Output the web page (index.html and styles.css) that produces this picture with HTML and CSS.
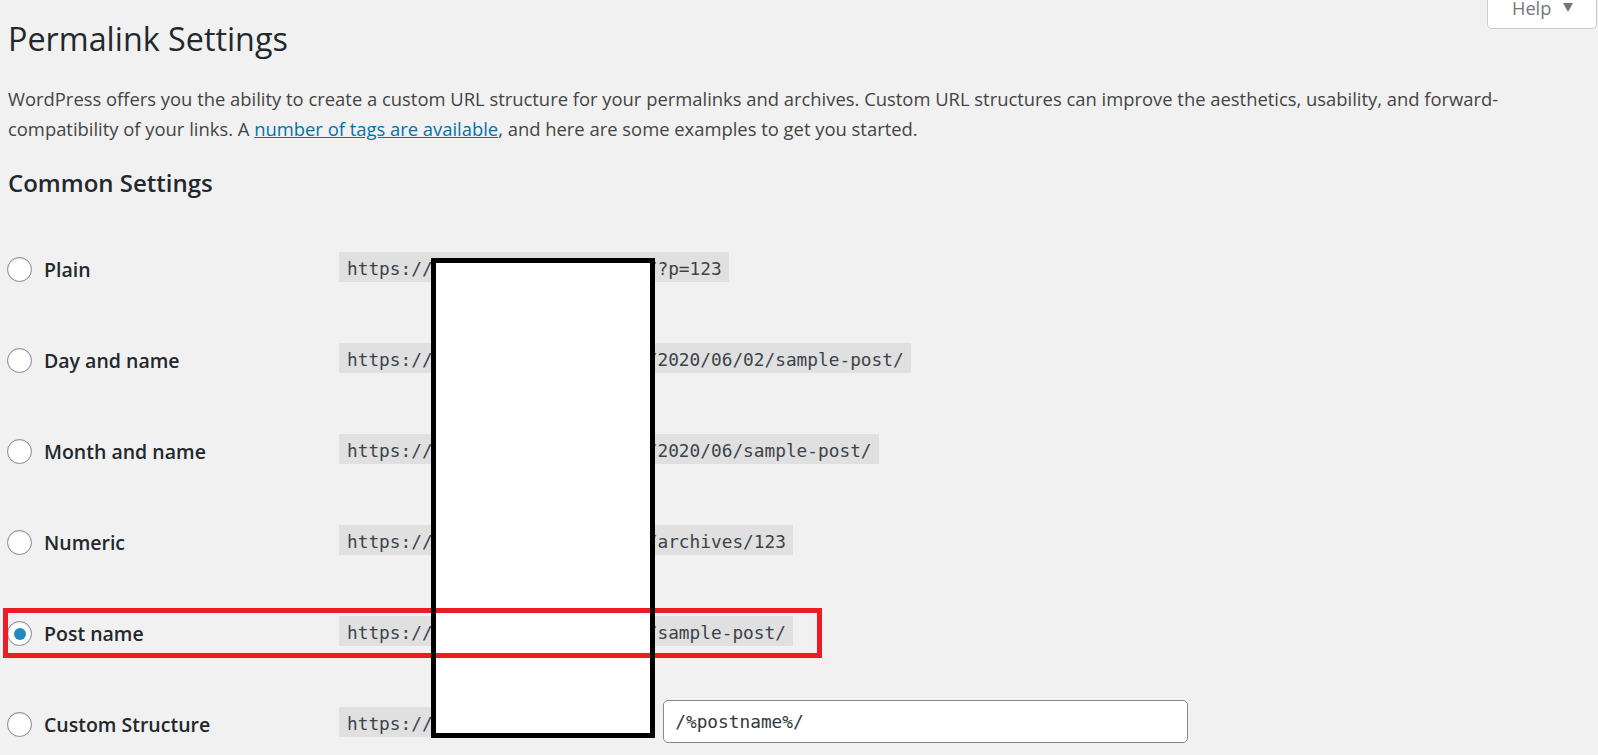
FILE: index.html
```html
<!DOCTYPE html>
<html lang="en">
<head>
<meta charset="utf-8">
<title>Permalink Settings</title>
<link rel="stylesheet" href="styles.css">
</head>
<body>
<div class="help-tab">
  <span class="help-label">Help</span>
  <span class="help-arrow"></span>
</div>
<div class="wrap">
  <h1 class="page-title">Permalink Settings</h1>
  <p class="intro">WordPress offers you the ability to create a custom URL structure for your permalinks and archives. Custom URL structures can improve the aesthetics, usability, and forward-compatibility of your links. A <a href="#" class="doc-link">number of tags are available</a>, and here are some examples to get you started.</p>
  <h2 class="section-title">Common Settings</h2>
  <div class="form-rows">
    <div class="row">
      <label class="choice"><input type="radio" name="selection" class="radio"><span>Plain</span></label>
      <div class="value"><code class="url">https://www.example-site.com/?p=123</code></div>
    </div>
    <div class="row">
      <label class="choice"><input type="radio" name="selection" class="radio"><span>Day and name</span></label>
      <div class="value"><code class="url">https://www.example-site.com/2020/06/02/sample-post/</code></div>
    </div>
    <div class="row">
      <label class="choice"><input type="radio" name="selection" class="radio"><span>Month and name</span></label>
      <div class="value"><code class="url">https://www.example-site.com/2020/06/sample-post/</code></div>
    </div>
    <div class="row">
      <label class="choice"><input type="radio" name="selection" class="radio"><span>Numeric</span></label>
      <div class="value"><code class="url">https://www.example-site.com/archives/123</code></div>
    </div>
    <div class="row">
      <label class="choice"><input type="radio" name="selection" class="radio" checked><span>Post name</span></label>
      <div class="value"><code class="url">https://www.example-site.com/sample-post/</code></div>
    </div>
    <div class="row">
      <label class="choice"><input type="radio" name="selection" class="radio"><span>Custom Structure</span></label>
      <div class="value custom"><code class="url">https://www.example-site.com</code><input type="text" class="structure-input" value="/%postname%/"></div>
    </div>
  </div>
</div>
<div class="redact"></div>
<div class="highlight"></div>
</body>
</html>
```
FILE: styles.css
```css
html {
  overflow: hidden;
}
body {
  margin: 0;
  height: 755px;
  position: relative;
  background: #f1f1f1;
  color: #444;
  font-family: "Open Sans", "Noto Sans", sans-serif;
  overflow: hidden;
}
.wrap {
  padding: 0 20px 0 8px;
}
.page-title {
  margin: 0;
  padding-top: 16px;
  font-size: 32.3px;
  line-height: 44px;
  font-weight: 400;
  color: #23282d;
}
.intro {
  margin: 24px 0 0;
  font-size: 18.4px;
  line-height: 30px;
  color: #444;
}
.doc-link {
  color: #0073aa;
  text-decoration: underline;
}
.section-title {
  margin: 23px 0 0;
  font-size: 24px;
  line-height: 32px;
  font-weight: 600;
  color: #23282d;
}
.form-rows {
  margin-top: 24px;
  display: flex;
  flex-direction: column;
}
.row {
  display: grid;
  grid-template-columns: 331px 1fr;
  height: 91px;
  align-items: center;
}
.choice {
  display: flex;
  align-items: center;
  gap: 12px;
  margin-top: 2px;
  font-size: 19.5px;
  line-height: 26px;
  font-weight: 600;
  color: #23282d;
}
.radio {
  appearance: none;
  -webkit-appearance: none;
  margin: 0 0 0 -1px;
  width: 25px;
  height: 25px;
  box-sizing: border-box;
  border: 1px solid #7e8993;
  border-radius: 50%;
  background: #fff;
  box-shadow: inset 0 1px 2px rgba(0, 0, 0, 0.1);
  display: flex;
  align-items: center;
  justify-content: center;
  flex: none;
}
.radio:checked::before {
  content: "";
  width: 12px;
  height: 12px;
  border-radius: 50%;
  background: #1e8cbe;
}
.value {
  display: flex;
  align-items: center;
  margin-bottom: 3px;
}
.url {
  display: inline-block;
  padding: 5px 7.5px 1px 8px;
  line-height: 24px;
  font-family: "DejaVu Sans Mono", "Liberation Mono", monospace;
  font-size: 17.8px;
  background: rgba(0, 0, 0, 0.07);
  color: #3c434a;
  white-space: nowrap;
}
.structure-input {
  margin: 0 0 0 9px;
  width: 525px;
  height: 43px;
  box-sizing: border-box;
  padding: 0 11px;
  border: 1px solid #7e8993;
  border-radius: 5px;
  background: #fff;
  font-family: "DejaVu Sans Mono", "Liberation Mono", monospace;
  font-size: 17.8px;
  color: #32373c;
  position: relative;
  top: -1px;
}
.help-tab {
  position: absolute;
  top: -10px;
  left: 1487px;
  width: 110px;
  box-sizing: border-box;
  padding: 6px 0 8px 24px;
  border: 1px solid #ccc;
  border-top: none;
  border-radius: 0 0 5px 5px;
  background: #fff;
  display: flex;
  align-items: flex-start;
  gap: 12px;
  font-size: 18.2px;
  line-height: 24px;
  color: #72777c;
}
.help-arrow {
  width: 0;
  height: 0;
  margin-top: 7px;
  border-left: 5.5px solid transparent;
  border-right: 5.5px solid transparent;
  border-top: 9px solid #72777c;
}
.redact {
  position: absolute;
  left: 431px;
  top: 258px;
  width: 224px;
  height: 480px;
  background: #fff;
}
.redact::after {
  content: "";
  position: absolute;
  inset: 0;
  border: 5px solid #000;
  z-index: 3;
}
.highlight {
  position: absolute;
  left: 3px;
  top: 608px;
  width: 819px;
  height: 50px;
  box-sizing: border-box;
  border: 5px solid #ed1c24;
  z-index: 2;
}
```
